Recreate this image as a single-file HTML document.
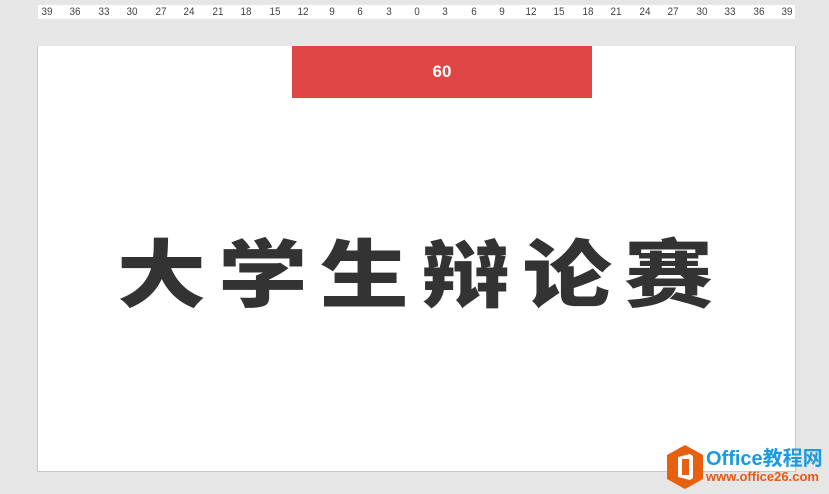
<!DOCTYPE html>
<html><head><meta charset="utf-8"><style>
body{margin:0;width:829px;height:494px;background:#e6e6e6;position:relative;overflow:hidden;font-family:"Liberation Sans",sans-serif}
.ruler{position:absolute;left:38px;top:5px;width:757px;height:14px;background:#fff;font-size:11px;color:#444;}
.ruler span{position:absolute;top:0;width:20px;margin-left:-10px;text-align:center;line-height:14px;font-family:"Liberation Sans Narrow","Liberation Sans",sans-serif;transform:scaleX(0.9)}
.slide{position:absolute;left:37px;top:46px;width:757px;height:425px;background:#fff;border:1px solid #c8c8c8;border-top:none}
.red{position:absolute;left:292px;top:46px;width:300px;height:52px;background:#e04545;color:#fff;font-weight:bold;font-size:17px;text-align:center;line-height:52px}
.title{position:absolute;left:117px;top:222px;font-family:"Noto Sans CJK SC","WenQuanYi Zen Hei",sans-serif;font-weight:900;font-size:74px;letter-spacing:10.5px;color:#333;line-height:96px;white-space:nowrap;transform:scaleX(1.2);transform-origin:0 0}
.logo{position:absolute;left:666px;top:444px}
.lt1{position:absolute;left:706px;top:447px;color:#1a9be0;font-weight:bold;font-size:20px;line-height:24px;white-space:nowrap;font-family:"Liberation Sans","Noto Sans CJK SC",sans-serif}
.lt2{position:absolute;left:706px;top:470px;color:#e85a0f;font-weight:bold;font-size:13px;line-height:14px;white-space:nowrap}
</style></head><body>
<div class="ruler" id="r"></div>
<div class="slide"></div>
<div class="red">60</div>
<div class="title">大学生辩论赛</div>
<svg class="logo" width="38" height="46" viewBox="0 0 38 46"><polygon points="19,1 37,11 37,35 19,45 1,35 1,11" fill="#e8600f"/><path d="M12 13 L24 10 L27 12 L27 34 L24 36 L12 33 Z" fill="#fff"/><rect x="16" y="15" width="7" height="16" fill="#e8600f"/></svg>
<div class="lt1">Office教程网</div>
<div class="lt2">www.office26.com</div>
<script>
var r=document.getElementById('r'),v=[39,36,33,30,27,24,21,18,15,12,9,6,3,0,3,6,9,12,15,18,21,24,27,30,33,36,39];
v.forEach(function(n,i){var s=document.createElement('span');s.style.left=(9+i*28.46)+'px';s.textContent=n;r.appendChild(s);});
</script>
</body></html>
